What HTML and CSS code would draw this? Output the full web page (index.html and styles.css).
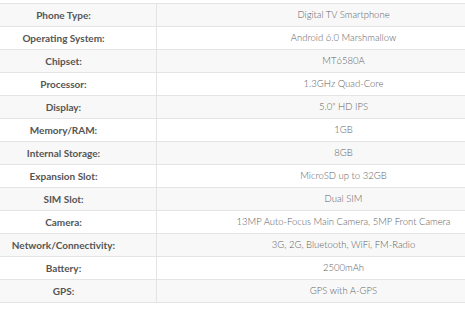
FILE: index.html
```html
<!DOCTYPE html>
<html>
<head>
<meta charset="utf-8">
<link rel="stylesheet" href="styles.css">
</head>
<body>
<table class="specs">
<tbody>
<tr><th>Phone Type:</th><td>Digital TV Smartphone</td></tr>
<tr><th>Operating System:</th><td>Android 6.0 Marshmallow</td></tr>
<tr><th>Chipset:</th><td>MT6580A</td></tr>
<tr><th>Processor:</th><td>1.3GHz Quad-Core</td></tr>
<tr><th>Display:</th><td>5.0" HD IPS</td></tr>
<tr><th>Memory/RAM:</th><td>1GB</td></tr>
<tr><th>Internal Storage:</th><td>8GB</td></tr>
<tr><th>Expansion Slot:</th><td>MicroSD up to 32GB</td></tr>
<tr><th>SIM Slot:</th><td>Dual SIM</td></tr>
<tr><th>Camera:</th><td>13MP Auto-Focus Main Camera, 5MP Front Camera</td></tr>
<tr><th>Network/Connectivity:</th><td>3G, 2G, Bluetooth, WiFi, FM-Radio</td></tr>
<tr><th>Battery:</th><td>2500mAh</td></tr>
<tr><th>GPS:</th><td>GPS with A-GPS</td></tr>
</tbody>
</table>
</body>
</html>
```
FILE: styles.css
```css
html, body {
  margin: 0;
  padding: 0;
  background: #ffffff;
  overflow: hidden;
}
body {
  padding-top: 3px;
  font-family: Lato, "Open Sans", sans-serif;
}
.specs {
  border-collapse: collapse;
  margin-left: -30px;
  width: 561px;
  table-layout: fixed;
}
.specs th,
.specs td {
  border: 1px solid #e4e4e4;
  height: 22px;
  padding: 0 4px;
  text-align: center;
  line-height: 22px;
  white-space: nowrap;
}
.specs th {
  width: 177px;
  font-size: 10px;
  font-weight: 700;
  color: #555555;
}
.specs td {
  font-size: 9.5px;
  font-weight: 300;
  color: #5e5e5e;
}
.specs tr:nth-child(odd) {
  background: #f8f8f8;
}
```
